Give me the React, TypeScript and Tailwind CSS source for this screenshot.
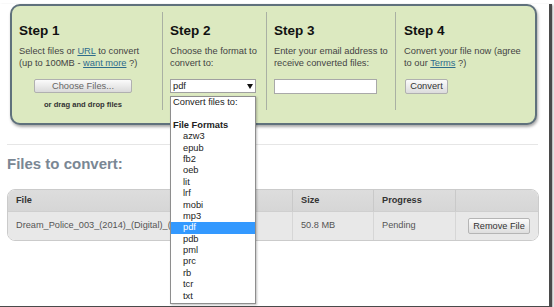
import React from "react";

const formats = ["azw3","epub","fb2","oeb","lit","lrf","mobi","mp3","pdf","pdb","pml","prc","rb","tcr","txt"];

function Link({ children }: { children: React.ReactNode }) {
  return <span className="text-[#2f6c8c] underline">{children}</span>;
}

export default function App() {
  return (
    <div className="w-[554px] h-[307px] bg-white overflow-hidden" style={{ fontFamily: '"Liberation Sans", Arial, sans-serif' }}>
      <div className="relative w-[552px] h-[305px] border-r-[3px] border-b-[3px] border-[#4a4a4a] shadow-[1px_1px_2px_rgba(0,0,0,0.35)]">
        {/* Steps panel */}
        <div className="ml-[10px] mt-[4px] w-[527px] h-[121px] border-2 border-[#5f717c] rounded-[10px] bg-[#dce9c0] shadow-[1px_2px_3px_rgba(0,0,0,0.35)] flex pt-[6px]">
          <div className="w-[151px] h-[98px] border-r border-[#a9b0a3] pl-[7px] pt-[11px]">
            <div className="text-[13.5px] leading-[16px] font-bold text-[#111]">Step 1</div>
            <div className="mt-[6px] text-[9.3px] leading-[12px] text-[#444]">
              Select files or <Link>URL</Link> to convert<br />(up to 100MB - <Link>want more</Link> ?)
            </div>
            <div className="mt-[10px] ml-[15px] w-[98px]">
              <div className="h-[14px] border border-[#b0b0b0] rounded-[2px] bg-gradient-to-b from-[#fbfbfb] to-[#dadada] text-[9.3px] leading-[12px] text-[#666] text-center">Choose Files...</div>
              <div className="mt-[7px] text-[7.6px] leading-[9px] font-bold text-[#333] text-center">or drag and drop files</div>
            </div>
          </div>
          <div className="w-[104px] h-[98px] border-r border-[#a9b0a3] pl-[7px] pt-[11px]">
            <div className="text-[13.5px] leading-[16px] font-bold text-[#111]">Step 2</div>
            <div className="mt-[6px] text-[9.3px] leading-[12px] text-[#444]">
              Choose the format to<br />convert to:
            </div>
            <div className="mt-[10px] w-[86px] h-[14px] border border-[#a0a0a0] bg-white flex items-center justify-between pl-[2px] pr-[2px] text-[9.3px] leading-[12px] text-[#222]">
              <span>pdf</span>
              <svg width="6" height="5" viewBox="0 0 6 5"><path d="M0 0h6L3 5z" fill="#111" /></svg>
            </div>
          </div>
          <div className="w-[129px] h-[98px] border-r border-[#a9b0a3] pl-[7px] pt-[11px]">
            <div className="text-[13.5px] leading-[16px] font-bold text-[#111]">Step 3</div>
            <div className="mt-[6px] text-[9.3px] leading-[12px] text-[#444]">
              Enter your email address to<br />receive converted files:
            </div>
            <div className="mt-[10px] w-[103px] h-[15px] border border-[#a9a9a9] bg-white" />
          </div>
          <div className="flex-1 h-[98px] pl-[8px] pt-[11px]">
            <div className="text-[13.5px] leading-[16px] font-bold text-[#111]">Step 4</div>
            <div className="mt-[6px] text-[9.3px] leading-[12px] text-[#444]">
              Convert your file now (agree<br />to our <Link>Terms</Link> ?)
            </div>
            <div className="mt-[10px] ml-[1px] w-[43px] h-[15px] border border-[#b0b0b0] rounded-[2px] bg-gradient-to-b from-[#fbfbfb] to-[#dcdcdc] text-[9.3px] leading-[13px] text-[#333] text-center">Convert</div>
          </div>
        </div>

        <div className="ml-[7px] mt-[19px] w-[531px] h-px bg-[#e6e6e6]" />

        <div className="ml-[7px] mt-[10px] text-[15px] leading-[18px] font-bold text-[#7a8794]">Files to convert:</div>

        {/* Table */}
        <div className="ml-[7px] mt-[16px] w-[532px] border border-[#cbcbcb] rounded-[8px] overflow-hidden text-[9.2px]">
          <div className="flex h-[22px] bg-gradient-to-b from-[#dddddd] to-[#d6d6d6] border-b border-[#cfcfcf] font-bold text-[#333] items-stretch">
            <div className="w-[285px] pl-[8px] flex items-center border-r border-[#c9c9c9]">File</div>
            <div className="w-[81px] pl-[8px] flex items-center border-r border-[#c9c9c9]">Size</div>
            <div className="w-[82px] pl-[8px] flex items-center border-r border-[#c9c9c9]">Progress</div>
            <div className="flex-1" />
          </div>
          <div className="flex h-[28px] bg-[#e8e8e8] text-[#555] items-stretch">
            <div className="w-[285px] pl-[8px] flex items-center border-r border-[#d6d6d6] whitespace-nowrap">Dream_Police_003_(2014)_(Digital)_(Zone-Empire)</div>
            <div className="w-[81px] pl-[8px] flex items-center border-r border-[#d6d6d6]">50.8 MB</div>
            <div className="w-[82px] pl-[8px] flex items-center border-r border-[#d6d6d6]">Pending</div>
            <div className="flex-1 flex items-center pl-[12px]">
              <div className="w-[62px] h-[16px] border border-[#b5b5b5] rounded-[2px] bg-gradient-to-b from-[#fbfbfb] to-[#dedede] text-[#333] text-center leading-[14px]">Remove File</div>
            </div>
          </div>
        </div>

        {/* Dropdown menu */}
        <div className="absolute left-[170px] top-[92px] w-[86px] h-[208px] border border-[#8e8e8e] bg-white shadow-[1px_1px_2px_rgba(0,0,0,0.25)] text-[9.3px] text-[#222]">
          <div className="h-[11.4px] leading-[11.4px] pl-[2px]">Convert files to:</div>
          <div className="h-[11.4px]" />
          <div className="h-[11.4px] leading-[11.4px] pl-[2px] font-bold">File Formats</div>
          {formats.map((f) => (
            <div key={f} className={f === "pdf" ? "h-[11.4px] leading-[11.4px] pl-[12px] bg-[#3399ff] text-white" : "h-[11.4px] leading-[11.4px] pl-[12px]"}>{f}</div>
          ))}
        </div>
      </div>
    </div>
  );
}
